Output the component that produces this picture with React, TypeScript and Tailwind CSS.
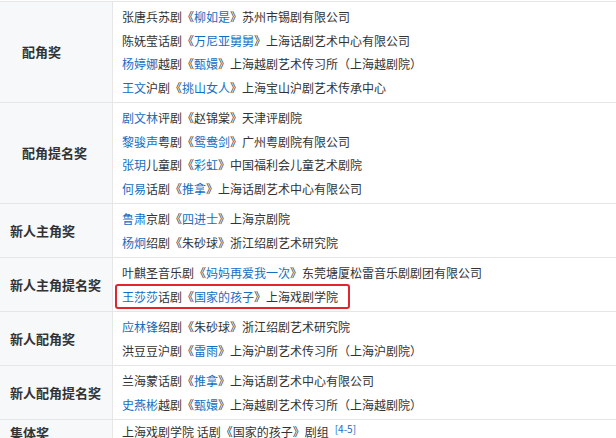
import React from 'react';

// 一段文字：[文本, 是否为链接]
type Seg = [string, boolean];

type Row = { label: string; indent?: boolean; lines: Seg[][] };

const rows: Row[] = [
  {
    label: '配角奖',
    indent: true,
    lines: [
      [['张唐兵苏剧《', false], ['柳如是', true], ['》苏州市锡剧有限公司', false]],
      [['陈妩莹话剧《', false], ['万尼亚舅舅', true], ['》上海话剧艺术中心有限公司', false]],
      [['杨婷娜', true], ['越剧《', false], ['甄嬛', true], ['》上海越剧艺术传习所（上海越剧院）', false]],
      [['王文', true], ['沪剧《', false], ['挑山女人', true], ['》上海宝山沪剧艺术传承中心', false]],
    ],
  },
  {
    label: '配角提名奖',
    indent: true,
    lines: [
      [['剧文林', true], ['评剧《赵锦棠》天津评剧院', false]],
      [['黎骏声', true], ['粤剧《', false], ['鸳鸯剑', true], ['》广州粤剧院有限公司', false]],
      [['张玥', true], ['儿童剧《', false], ['彩虹', true], ['》中国福利会儿童艺术剧院', false]],
      [['何易', true], ['话剧《', false], ['推拿', true], ['》上海话剧艺术中心有限公司', false]],
    ],
  },
  {
    label: '新人主角奖',
    lines: [
      [['鲁肃', true], ['京剧《', false], ['四进士', true], ['》上海京剧院', false]],
      [['杨炯', true], ['绍剧《朱砂球》浙江绍剧艺术研究院', false]],
    ],
  },
  {
    label: '新人主角提名奖',
    lines: [
      [['叶麒圣音乐剧《', false], ['妈妈再爱我一次', true], ['》东莞塘厦松雷音乐剧剧团有限公司', false]],
      [['王莎莎', true], ['话剧《', false], ['国家的孩子', true], ['》上海戏剧学院', false]],
    ],
  },
  {
    label: '新人配角奖',
    lines: [
      [['应林锋', true], ['绍剧《朱砂球》浙江绍剧艺术研究院', false]],
      [['洪豆豆沪剧《', false], ['雷雨', true], ['》上海沪剧艺术传习所（上海沪剧院）', false]],
    ],
  },
  {
    label: '新人配角提名奖',
    lines: [
      [['兰海蒙话剧《', false], ['推拿', true], ['》上海话剧艺术中心有限公司', false]],
      [['史燕彬', true], ['越剧《', false], ['甄嬛', true], ['》上海越剧艺术传习所（上海越剧院）', false]],
    ],
  },
];

const Line: React.FC<{ segs: Seg[] }> = ({ segs }) => (
  <div className="h-[23.5px] leading-[23.5px] whitespace-nowrap">
    {segs.map(([t, link], i) =>
      link ? (
        <span key={i} className="text-[#136ec2]">{t}</span>
      ) : (
        <span key={i}>{t}</span>
      )
    )}
  </div>
);

const App: React.FC = () => {
  return (
    <div
      className="w-[616px] h-[438px] overflow-hidden bg-white pt-[1px] text-[12px] text-[#333]"
      style={{ fontFamily: '"Noto Sans CJK SC", "Noto Sans", sans-serif' }}
    >
      {rows.map((row, ri) => (
        <div key={ri} className="flex border-t border-[#e6e6e6]">
          <div
            className={
              row.indent
                ? 'w-[113px] shrink-0 flex items-center pl-[22px] bg-[#f7f8fa] border-r border-[#e6e6e6] font-bold text-[13px] text-[#333]'
                : 'w-[113px] shrink-0 flex items-center pl-[10px] bg-[#f7f8fa] border-r border-[#e6e6e6] font-bold text-[13px] text-[#333]'
            }
          >
            {row.label}
          </div>
          <div className="flex-1 pl-[9px] py-[3px]">
            {row.lines.map((segs, li) =>
              ri === 3 && li === 1 ? (
                <div key={li} className="relative w-fit">
                  <Line segs={segs} />
                  <div className="absolute -left-[7px] -right-[12px] -top-[1px] -bottom-[1px] border-2 border-[#e0262b] rounded-[3px]" />
                </div>
              ) : (
                <Line key={li} segs={segs} />
              )
            )}
          </div>
        </div>
      ))}
      <div className="flex border-t border-[#e6e6e6]">
        <div className="w-[113px] shrink-0 flex items-center pl-[10px] bg-[#f7f8fa] border-r border-[#e6e6e6] font-bold text-[13px]">
          集体奖
        </div>
        <div className="flex-1 pl-[9px] pt-0 pb-[2px]">
          <div className="h-[23.5px] leading-[23.5px] whitespace-nowrap">
            上海戏剧学院 话剧《国家的孩子》剧组
            <sup className="ml-[6px] text-[10px] text-[#136ec2] relative -top-[4px]">[4-5]</sup>
          </div>
        </div>
      </div>
    </div>
  );
};

export default App;
